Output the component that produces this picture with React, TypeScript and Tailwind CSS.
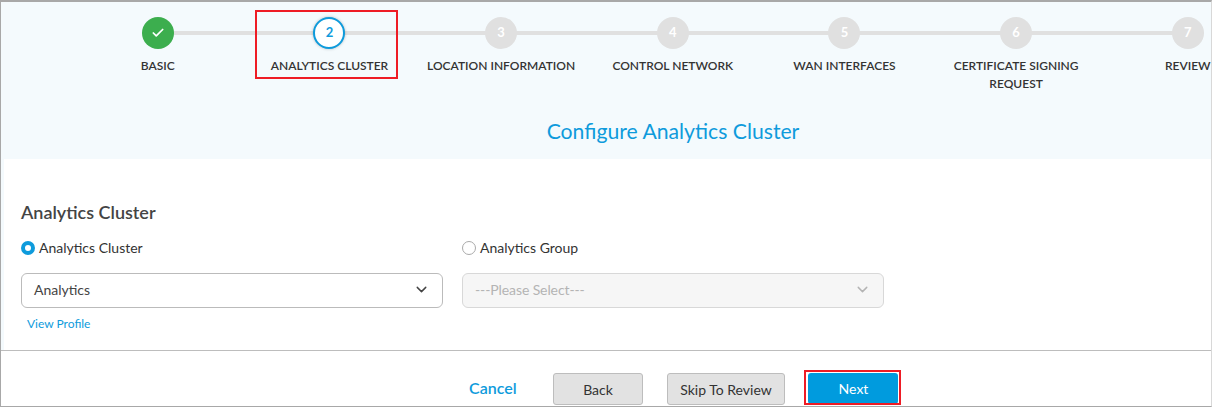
import React from "react";
import { Check, ChevronDown } from "lucide-react";

const steps = [
  { n: "1", label: "BASIC", state: "done" },
  { n: "2", label: "ANALYTICS CLUSTER", state: "active" },
  { n: "3", label: "LOCATION INFORMATION", state: "todo" },
  { n: "4", label: "CONTROL NETWORK", state: "todo" },
  { n: "5", label: "WAN INTERFACES", state: "todo" },
  { n: "6", label: "CERTIFICATE SIGNING REQUEST", state: "todo" },
  { n: "7", label: "REVIEW", state: "todo" },
];

function Step({ n, label, state, index }: { n: string; label: string; state: string; index: number }) {
  return (
    <div className="relative flex w-[171.67px] shrink-0 flex-col items-center">
      {index > 0 && <div className="absolute left-[-50%] top-[14px] h-[4px] w-full bg-[#e0e0e0]" />}
      {state === "done" && (
        <div className="relative z-10 flex h-[32px] w-[32px] items-center justify-center rounded-full bg-[#3cae4e] text-white">
          <Check size={14} strokeWidth={3} />
        </div>
      )}
      {state === "active" && (
        <div className="relative z-10 flex h-[32px] w-[32px] items-center justify-center rounded-full border-2 border-[#0e9bdc] bg-white text-[13px] font-bold text-[#0e9bdc] shadow-[0_0_3px_rgba(0,0,0,0.25)]">
          {n}
        </div>
      )}
      {state === "todo" && (
        <div className="relative z-10 flex h-[32px] w-[32px] items-center justify-center rounded-full bg-[#e0e0e0] text-[13px] font-bold text-white">
          {n}
        </div>
      )}
      <div className="mt-[8px] w-[160px] text-center text-[12px] font-semibold leading-[18px] text-[#333333]">{label}</div>
    </div>
  );
}

function Radio({ checked, label }: { checked: boolean; label: string }) {
  return (
    <div className="flex h-[20px] items-center gap-[4px]">
      {checked ? (
        <span className="h-[14px] w-[14px] rounded-full border-[4px] border-[#0e9bdc] bg-white" />
      ) : (
        <span className="h-[14px] w-[14px] rounded-full border border-[#aaaaaa] bg-white" />
      )}
      <span className="relative top-[-1px] text-[14px] text-[#333333]">{label}</span>
    </div>
  );
}

export default function App() {
  return (
    <div
      className="relative h-[407px] w-[1212px] overflow-hidden border border-t-2 border-[#a8a8a8] border-r-[#d8d8d8] bg-white"
      style={{ fontFamily: '"Lato", "Open Sans", sans-serif' }}
    >
      <div className="h-[157px] overflow-hidden bg-[#f4fafd]">
        <div className="flex pl-[71px] pt-[15px]">
          {steps.map((s, i) => (
            <Step key={s.n} index={i} n={s.n} label={s.label} state={s.state} />
          ))}
        </div>
        <div className="mt-[24px] pl-[134px] text-center text-[21.2px] leading-[28px] text-[#0e9bdc]">Configure Analytics Cluster</div>
      </div>
      <div className="absolute left-0 top-[157px] h-[191px] w-[3px] bg-[#f4fafd]" />
      <div className="flex h-[191px] flex-col pl-[20px] pt-[43px]">
        <div className="text-[18px] font-semibold leading-[20px] text-[#444444]">Analytics Cluster</div>
        <div className="mt-[16px] flex gap-[19px]">
          <div className="w-[422px]">
            <Radio checked label="Analytics Cluster" />
            <div className="mt-[15px] flex h-[35px] items-center justify-between rounded-[6px] border border-[#bbbbbb] bg-white pb-[2px] pl-[12px] pr-[12px] text-[14px] text-[#444444]">
              <span>Analytics</span>
              <ChevronDown size={17} color="#444444" />
            </div>
            <div className="mt-[8px] pl-[6px] text-[12px] leading-[16px] text-[#0e9bdc]">View Profile</div>
          </div>
          <div className="w-[422px]">
            <Radio checked={false} label="Analytics Group" />
            <div className="mt-[15px] flex h-[35px] items-center justify-between rounded-[6px] border border-[#d8d8d8] bg-[#f6f6f6] pb-[2px] pl-[12px] pr-[12px] text-[14px] text-[#b4b4b4]">
              <span className="tracking-[-0.1px]">---Please Select---</span>
              <ChevronDown size={17} color="#b4b4b4" />
            </div>
          </div>
        </div>
      </div>
      <div className="flex h-[56px] items-start border-t border-[#bdbdbd] pl-[468px] pt-[22px]">
        <span className="mt-[5px] w-[84px] text-[16px] font-semibold leading-[20px] text-[#0e9bdc]">Cancel</span>
        <button className="h-[32px] w-[90px] rounded-[3px] border border-[#bdbdbd] bg-[#e2e2e2] text-[14px] text-[#333333]">Back</button>
        <button className="ml-[24px] h-[32px] w-[118px] rounded-[3px] border border-[#bdbdbd] bg-[#e2e2e2] text-[14px] text-[#333333]">Skip To Review</button>
        <button className="ml-[23px] h-[31px] w-[90px] rounded-[3px] bg-[#009bde] pl-[1px] text-[14px] text-white">Next</button>
      </div>
      <div className="pointer-events-none absolute left-[254px] top-[8px] h-[69px] w-[143px] border-2 border-[#ee1c25]" />
      <div className="pointer-events-none absolute left-[803px] top-[368px] h-[35px] w-[97px] border-2 border-[#ee1c25]" />
    </div>
  );
}
